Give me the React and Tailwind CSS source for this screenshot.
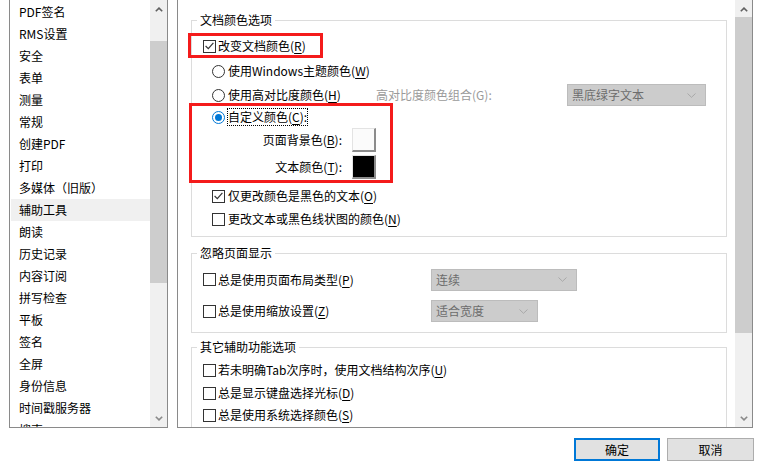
import React from 'react'

const categories = [
  'PDF签名', 'RMS设置', '安全', '表单', '测量', '常规', '创建PDF', '打印',
  '多媒体（旧版）', '辅助工具', '朗读', '历史记录', '内容订阅', '拼写检查',
  '平板', '签名', '全屏', '身份信息', '时间戳服务器', '搜索',
]

function Key({ k }) {
  return <>(<span className="underline underline-offset-2">{k}</span>)</>
}

function Box({ checked }) {
  return (
    <span className="w-[13px] h-[13px] border border-[#333333] bg-white flex items-center justify-center shrink-0">
      {checked && (
        <svg width="9" height="8" viewBox="0 0 9 8">
          <path d="M0.6 4 L3.3 6.6 L8.4 0.9" fill="none" stroke="#333333" strokeWidth="1.2" />
        </svg>
      )}
    </span>
  )
}

function Radio({ checked }) {
  return (
    <span className={`w-[13px] h-[13px] rounded-full border bg-white flex items-center justify-center shrink-0 ${checked ? 'border-[#0078d7]' : 'border-[#333333]'}`}>
      {checked && <span className="w-[7px] h-[7px] rounded-full bg-[#0078d7]" />}
    </span>
  )
}

function Chevron({ up, color = '#606060' }) {
  return (
    <svg width="8" height="5" viewBox="0 0 8 5">
      <path d={up ? 'M0.8 4.3 L4 1.1 L7.2 4.3' : 'M0.8 0.7 L4 3.9 L7.2 0.7'} fill="none" stroke={color} strokeWidth="1.6" />
    </svg>
  )
}

function Scrollbar({ thumbTop, thumbHeight }) {
  return (
    <div className="w-[17px] shrink-0 bg-[#f0f0f0] flex flex-col">
      <div className="h-[17px] flex items-center justify-center pt-[2px]">
        <Chevron up />
      </div>
      <div className="flex-1">
        <div className={`bg-[#cdcdcd] ${thumbTop} ${thumbHeight}`} />
      </div>
      <div className="h-[17px] flex items-center justify-center">
        <Chevron color="#8a8a8a" />
      </div>
    </div>
  )
}

function Combo({ value, width }) {
  return (
    <div className={`h-[22px] ${width} bg-[#cccccc] border border-[#bcbcbc] flex items-center justify-between pl-[4px] pr-[9px] text-[#6d6d6d]`}>
      <span>{value}</span>
      <svg width="9" height="5" viewBox="0 0 9 5">
        <path d="M0.5 0.5 L4.5 4.3 L8.5 0.5" fill="none" stroke="#a8a8a8" strokeWidth="1" />
      </svg>
    </div>
  )
}

function Group({ title, className, children }) {
  return (
    <fieldset className={`border border-[#dcdcdc] ${className}`}>
      <legend className="ml-[5px] px-[3px] leading-[16px]">{title}</legend>
      {children}
    </fieldset>
  )
}

function CheckRow({ checked, className, children }) {
  return (
    <div className={`h-[22px] flex items-center ${className}`}>
      <Box checked={checked} />
      <span className="ml-[2px]">{children}</span>
    </div>
  )
}

function ColorButton({ color }) {
  return (
    <div className={`w-[24px] h-[24px] ml-[10px] border-t border-l border-[#e3e3e3] border-r-2 border-b-2 border-r-[#8c8c8c] border-b-[#8c8c8c] ${color}`} />
  )
}

export default function App() {
  return (
    <div className="w-[769px] h-[476px] bg-white text-black text-[12px] leading-[16px] font-['Noto_Sans_CJK_SC',sans-serif] overflow-hidden">
      <div className="flex h-[428px]">
        {/* category list */}
        <div className="ml-[9px] w-[159px] h-[428px] border border-t-0 border-[#8a8a8a] flex overflow-hidden">
          <div className="flex-1 pt-[1px] pl-[1px] overflow-hidden">
            {categories.map((c) => (
              <div key={c} className={`h-[22px] shrink-0 flex items-center pl-[8px] ${c === '辅助工具' ? 'bg-[#f0f0f0]' : ''}`}>
                {c}
              </div>
            ))}
          </div>
          <Scrollbar thumbTop="mt-[24px]" thumbHeight="h-[242px]" />
        </div>

        {/* settings panel */}
        <div className="ml-[9px] w-[576px] h-[428px] border border-t-0 border-[#8a8a8a] flex overflow-hidden">
          <div className="flex-1 relative pt-[12px] pl-[13px] pr-[8px] overflow-hidden">
            <Group title="文档颜色选项" className="pb-[6px]">
              <CheckRow checked className="mt-[7px] pl-[11px]">
                改变文档颜色<Key k="R" />
              </CheckRow>
              <div className="mt-[3px] h-[22px] flex items-center pl-[20px]">
                <Radio />
                <span className="ml-[3px]">使用Windows主题颜色<Key k="W" /></span>
              </div>
              <div className="mt-[2px] h-[22px] flex items-center pl-[20px]">
                <div className="w-[164px] flex items-center">
                  <Radio />
                  <span className="ml-[3px]">使用高对比度颜色<Key k="H" /></span>
                </div>
                <span className="w-[191px] text-[#9a9a9a]">高对比度颜色组合(G):</span>
                <Combo value="黑底绿字文本" width="w-[139px]" />
              </div>
              <div className="h-[22px] flex items-center pl-[20px]">
                <Radio checked />
                <span className="ml-[3px] outline-dotted outline-1 outline-black">自定义颜色<Key k="C" />:</span>
              </div>
              <div className="h-[24px] flex items-center pl-[20px]">
                <span className="w-[130px] text-right">页面背景色<Key k="B" />:</span>
                <ColorButton color="bg-[#fbfbfb]" />
              </div>
              <div className="mt-[3px] h-[23px] flex items-center pl-[20px]">
                <span className="w-[130px] text-right">文本颜色<Key k="T" />:</span>
                <ColorButton color="bg-black" />
              </div>
              <CheckRow checked className="mt-[7px] pl-[20px]">
                <span className="ml-[1px]">仅更改颜色是黑色的文本<Key k="O" /></span>
              </CheckRow>
              <CheckRow className="mt-[1px] pl-[20px]">
                <span className="ml-[1px]">更改文本或黑色线状图的颜色<Key k="N" /></span>
              </CheckRow>
            </Group>

            <Group title="忽略页面显示" className="mt-[8px] pb-[10px]">
              <div className="mt-[7px] h-[23px] flex items-center pl-[11px]">
                <div className="w-[228px] flex items-center">
                  <Box />
                  <span className="ml-[2px]">总是使用页面布局类型<Key k="P" /></span>
                </div>
                <Combo value="连续" width="w-[146px]" />
              </div>
              <div className="mt-[9px] h-[22px] flex items-center pl-[11px]">
                <div className="w-[228px] flex items-center">
                  <Box />
                  <span className="ml-[2px]">总是使用缩放设置<Key k="Z" /></span>
                </div>
                <Combo value="适合宽度" width="w-[107px]" />
              </div>
            </Group>

            <Group title="其它辅助功能选项" className="mt-[6px] pb-[10px]">
              <CheckRow className="mt-[4px] pl-[11px]">
                若未明确Tab次序时，使用文档结构次序<Key k="U" />
              </CheckRow>
              <CheckRow className="mt-[1px] pl-[11px]">
                总是显示键盘选择光标<Key k="D" />
              </CheckRow>
              <CheckRow className="pl-[11px]">
                总是使用系统选择颜色<Key k="S" />
              </CheckRow>
            </Group>

            {/* red annotation frames */}
            <div className="pointer-events-none absolute left-[10px] top-[33px] w-[135px] h-[25px] border-[3px] border-[#f41b1b]" />
            <div className="pointer-events-none absolute left-[11px] top-[103px] w-[204px] h-[80px] border-[3px] border-[#f41b1b]" />
          </div>
          <Scrollbar thumbTop="mt-0" thumbHeight="h-[316px]" />
        </div>
      </div>

      <div className="flex justify-end pr-[15px] mt-[10px]">
        <button type="button" className="w-[86px] h-[23px] border-2 border-[#0078d7] bg-[#e1e1e1] flex items-center justify-center">
          确定
        </button>
        <button type="button" className="ml-[7px] w-[87px] h-[23px] border border-[#adadad] bg-[#e1e1e1] flex items-center justify-center">
          取消
        </button>
      </div>
    </div>
  )
}
